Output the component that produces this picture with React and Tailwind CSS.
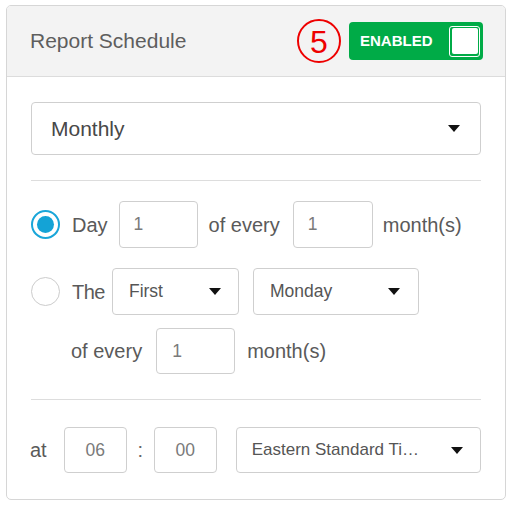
import React from "react";

const font = { fontFamily: '"Liberation Sans", Arial, sans-serif' };

function Caret() {
  return (
    <svg width="12" height="7" viewBox="0 0 12 7" className="shrink-0">
      <path d="M0 0h12L6 7z" fill="#111" />
    </svg>
  );
}

function Select({ label, className, textClass = "text-[17.5px] text-[#555]" }) {
  return (
    <div className={`flex items-center justify-between border border-[#cfcfcf] rounded-[4px] bg-white ${className}`}>
      <span className={`whitespace-nowrap ${textClass}`}>{label}</span>
      <Caret />
    </div>
  );
}

function Box({ value, className }) {
  return (
    <div className={`flex items-center border border-[#cfcfcf] rounded-[4px] bg-white text-[17.5px] text-[#7a7a7a] ${className}`}>
      {value}
    </div>
  );
}

function Radio({ checked }) {
  return checked ? (
    <span className="w-[29px] h-[29px] rounded-full border-[2px] border-[#1aa6d9] flex items-center justify-center shrink-0">
      <span className="w-[17px] h-[17px] rounded-full bg-[#14a3d6]" />
    </span>
  ) : (
    <span className="w-[29px] h-[29px] rounded-full border-[1.5px] border-[#cccccc] bg-white shrink-0" />
  );
}

export default function App() {
  const label = "text-[20px] text-[#5a5a5a]";
  return (
    <div className="w-[512px] h-[507px] bg-white pt-[5px] pl-[6px]" style={font}>
      <div className="w-[500px] h-[495px] border border-[#d6d6d6] rounded-[5px] overflow-hidden flex flex-col">
        {/* header */}
        <div className="h-[71px] shrink-0 bg-[#f3f3f3] border-b border-[#dcdcdc] flex items-center pl-[23px] pr-[22px]">
          <span className="text-[21px] text-[#5e5e5e]">Report Schedule</span>
          <div className="ml-auto flex items-center gap-[8px]">
            <span className="w-[44px] h-[44px] rounded-full border-[2.5px] border-[#ee0000] flex items-center justify-center text-[32px] leading-none text-[#ee0000] pt-[1px]">
              5
            </span>
            <div className="w-[134px] h-[38px] bg-[#00ab47] rounded-[4px] flex items-center pl-[11px] pr-[3px]">
              <span className="text-white font-bold text-[15px]">ENABLED</span>
              <span className="ml-auto w-[31px] h-[31px] border-[1.5px] border-white rounded-[3px] p-[1.5px]">
                <span className="block w-full h-full bg-white rounded-[2px]" />
              </span>
            </div>
          </div>
        </div>

        {/* body */}
        <div className="flex flex-col px-[24px] pt-[25px]">
          <Select
            label="Monthly"
            className="h-[53px] pl-[19px] pr-[20px]"
            textClass="text-[21px] text-[#484848]"
          />
          <div className="h-px bg-[#dddddd] mt-[25px]" />

          <div className="flex items-center mt-[20px] h-[47px]">
            <Radio checked />
            <span className={`ml-[12px] ${label}`}>Day</span>
            <Box value="1" className="ml-[11px] w-[79px] h-[47px] pl-[14px]" />
            <span className={`ml-[11px] ${label}`}>of every</span>
            <Box value="1" className="ml-[13px] w-[80px] h-[47px] pl-[14px]" />
            <span className={`ml-[10px] ${label}`}>month(s)</span>
          </div>

          <div className="flex items-center mt-[20px] h-[47px]">
            <Radio />
            <span className={`ml-[12px] ${label} tracking-[-0.5px]`}>The</span>
            <Select label="First" className="ml-[7px] w-[127px] h-[47px] pl-[16px] pr-[17px]" />
            <Select label="Monday" className="ml-[14px] w-[166px] h-[47px] pl-[16px] pr-[18px]" />
          </div>

          <div className="flex items-center mt-[13px] h-[46px] pl-[40px]">
            <span className={label}>of every</span>
            <Box value="1" className="ml-[14px] w-[79px] h-[46px] pl-[15px]" />
            <span className={`ml-[12px] ${label}`}>month(s)</span>
          </div>

          <div className="h-px bg-[#dddddd] mt-[25px]" />

          <div className="flex items-center mt-[27px] h-[46px]">
            <span className={`${label} ml-[-1px]`}>at</span>
            <Box value="06" className="ml-[17px] w-[63px] h-[46px] justify-center" />
            <span className="w-[27px] text-center text-[20px] text-[#666]">:</span>
            <Box value="00" className="w-[63px] h-[46px] justify-center" />
            <Select
              label="Eastern Standard Ti…"
              className="ml-[19px] w-[245px] h-[46px] pl-[15px] pr-[17px]"
              textClass="text-[17px] text-[#555]"
            />
          </div>
        </div>
      </div>
    </div>
  );
}
